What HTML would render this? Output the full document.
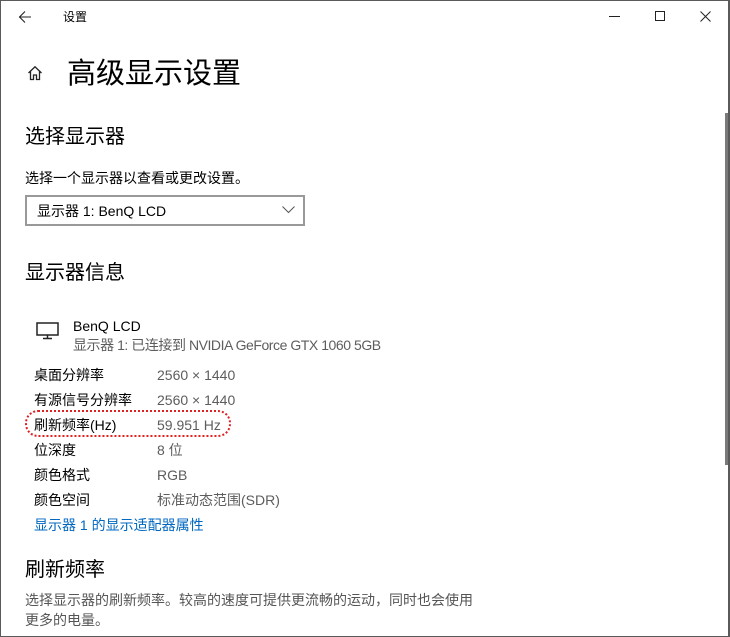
<!DOCTYPE html>
<html><head><meta charset="utf-8"><style>
*{margin:0;padding:0;box-sizing:border-box}
body{width:730px;height:637px;background:#fff;position:relative;overflow:hidden;font-family:"Liberation Sans","Noto Sans CJK SC",sans-serif;color:#000}
.frame{position:absolute;left:0;top:0;width:730px;height:637px;border:1px solid #5a5a5a;border-right-width:2px}
.a{position:absolute;white-space:nowrap}
.t14{font-size:14px;line-height:18px}
.g{color:#5d5d5d}
.h2{font-size:20px;line-height:26px}
</style></head><body>
<div class="frame"></div>
<svg class="a" style="left:18px;top:10px" width="14" height="14" viewBox="0 0 14 14"><path d="M13 7H1.5M7 1.5L1.5 7L7 12.5" fill="none" stroke="#222" stroke-width="1.1"/></svg>
<div class="a" style="left:63px;top:9px;font-size:12px;line-height:16px">设置</div>
<svg class="a" style="left:609px;top:16px" width="12" height="2"><rect width="11" height="1" fill="#222"/></svg>
<svg class="a" style="left:655px;top:11px" width="11" height="11"><rect x="0.5" y="0.5" width="9" height="9" fill="none" stroke="#222"/></svg>
<svg class="a" style="left:700px;top:11px" width="11" height="11"><path d="M0.5 0.5L10.5 10.5M10.5 0.5L0.5 10.5" stroke="#222"/></svg>
<svg class="a" style="left:27px;top:65px" width="16" height="16" viewBox="0 0 16 16"><path d="M1.5 8L8 1.8L14.5 8M3.5 6.5V14.5H6.5V10H9.5V14.5H12.5V6.5" fill="none" stroke="#222" stroke-width="1.3"/></svg>
<div class="a" style="left:67px;top:55px;font-size:29px;line-height:38px">高级显示设置</div>
<div class="a h2" style="left:25px;top:124px">选择显示器</div>
<div class="a t14" style="left:25px;top:169px">选择一个显示器以查看或更改设置。</div>
<div class="a" style="left:25px;top:195px;width:280px;height:31px;border:2px solid #999"></div>
<div class="a t14" style="left:37px;top:202px">显示器 1: BenQ LCD</div>
<svg class="a" style="left:282px;top:206px" width="13" height="8"><path d="M0.5 0.5L6.5 6.5L12.5 0.5" fill="none" stroke="#555"/></svg>
<div class="a h2" style="left:25px;top:260px">显示器信息</div>
<svg class="a" style="left:36px;top:322px" width="24" height="18" viewBox="0 0 24 18"><rect x="1" y="1" width="21" height="12" fill="none" stroke="#222" stroke-width="1.5"/><path d="M11.5 13V16M7 16.5H16" stroke="#222" stroke-width="1.5"/></svg>
<div class="a t14" style="left:73px;top:317px">BenQ LCD</div>
<div class="a t14 g" style="left:73px;top:336px;letter-spacing:-0.45px">显示器 1: 已连接到 NVIDIA GeForce GTX 1060 5GB</div>
<div class="a t14" style="left:34px;top:366px">桌面分辨率</div><div class="a t14 g" style="left:157px;top:366px">2560 × 1440</div>
<div class="a t14" style="left:34px;top:391px">有源信号分辨率</div><div class="a t14 g" style="left:157px;top:391px">2560 × 1440</div>
<div class="a t14" style="left:34px;top:416px">刷新频率(Hz)</div><div class="a t14 g" style="left:157px;top:416px">59.951 Hz</div>
<div class="a t14" style="left:34px;top:441px">位深度</div><div class="a t14 g" style="left:157px;top:441px">8 位</div>
<div class="a t14" style="left:34px;top:466px">颜色格式</div><div class="a t14 g" style="left:157px;top:466px">RGB</div>
<div class="a t14" style="left:34px;top:491px">颜色空间</div><div class="a t14 g" style="left:157px;top:491px">标准动态范围(SDR)</div>
<div class="a t14" style="left:34px;top:516px;color:#0067c0">显示器 1 的显示适配器属性</div>
<div class="a" style="left:25px;top:410px;width:206px;height:27px;border:2.5px dotted #e02020;border-radius:13px"></div>
<div class="a h2" style="left:25px;top:557px">刷新频率</div>
<div class="a t14 g" style="left:25px;top:591px;color:#555">选择显示器的刷新频率。较高的速度可提供更流畅的运动，同时也会使用</div>
<div class="a t14 g" style="left:25px;top:611px;color:#555">更多的电量。</div>
<div class="a" style="left:725px;top:113px;width:3px;height:352px;background:#7a7a7a"></div>
</body></html>
